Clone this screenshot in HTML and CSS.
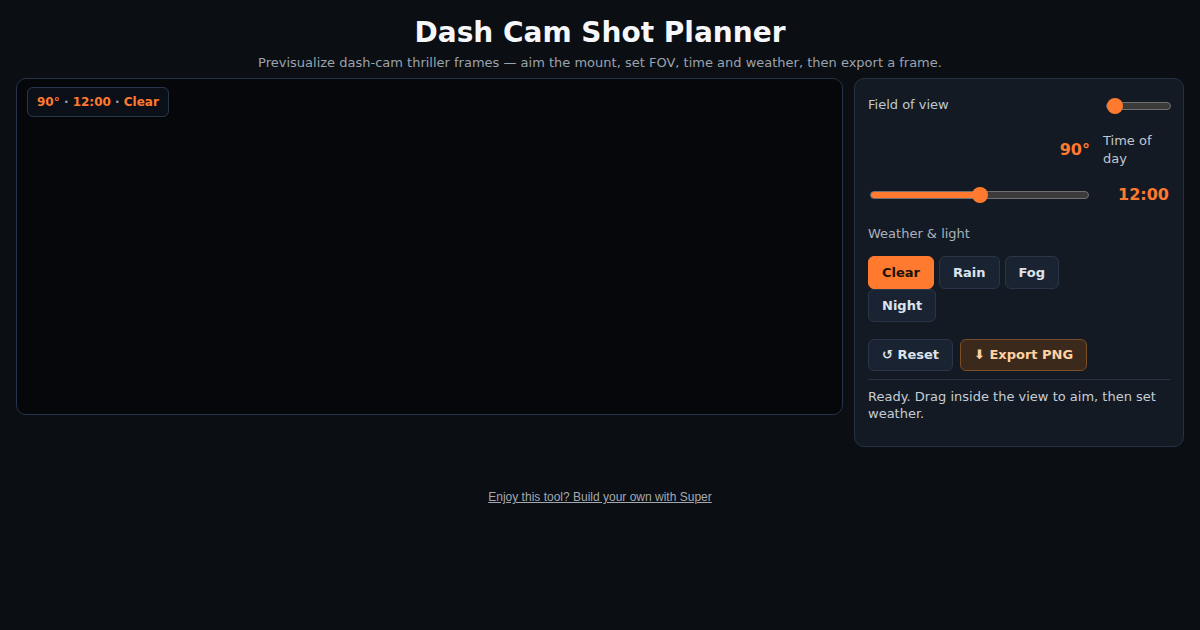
FILE: index.html
```html
<!DOCTYPE html>
<html lang="en">
<head>
<meta charset="utf-8">
<title>Dash Cam Shot Planner</title>
<link rel="stylesheet" href="styles.css">
</head>
<body>
<header class="header">
  <h1 class="title">Dash Cam Shot Planner</h1>
  <p class="subtitle">Previsualize dash-cam thriller frames — aim the mount, set FOV, time and weather, then export a frame.</p>
</header>
<main class="layout">
  <section class="view">
    <div class="badge">90° <span class="dot">·</span> 12:00 <span class="dot">·</span> Clear</div>
  </section>
  <aside class="panel">
    <div class="controls">
      <label class="ctl-label ctl-first" for="fov">Field of view</label>
      <input id="fov" class="range range-fov" type="range" min="90" max="170" value="90" style="--p: 0%">
      <span class="value">90°</span>
      <label class="ctl-label" for="tod">Time of day</label>
      <input id="tod" class="range range-tod" type="range" min="0" max="24" value="12" style="--p: 50%">
      <span class="value">12:00</span>
    </div>
    <div class="section-label">Weather &amp; light</div>
    <div class="weather">
      <button class="btn btn-active">Clear</button>
      <button class="btn">Rain</button>
      <button class="btn">Fog</button>
      <button class="btn">Night</button>
    </div>
    <div class="actions">
      <button class="btn btn-action">↺ Reset</button>
      <button class="btn btn-export">⬇ Export PNG</button>
    </div>
    <p class="status">Ready. Drag inside the view to aim, then set weather.</p>
  </aside>
</main>
<footer class="footer">
  <a class="footer-link" href="#">Enjoy this tool? Build your own with Super</a>
</footer>
</body>
</html>
```
FILE: styles.css
```css
* { box-sizing: border-box; }
html, body { height: 100%; }
body {
  margin: 0;
  background: #0b0e13;
  font-family: "DejaVu Sans", sans-serif;
  color: #c3cad3;
}
.header { text-align: center; padding-top: 16px; }
.title {
  margin: 0;
  font-size: 28px;
  line-height: 34px;
  font-weight: bold;
  color: #f5f7fa;
}
.subtitle {
  margin: 4px 0 0;
  font-size: 13px;
  line-height: 18px;
  color: #9aa3ae;
}
.layout {
  display: grid;
  grid-template-columns: 1fr 330px;
  column-gap: 11px;
  align-items: start;
  padding: 0 16px;
  margin-top: 6px;
}
.view {
  position: relative;
  height: 337px;
  background: #05070a;
  border: 1px solid #26334a;
  border-radius: 10px;
}
.badge {
  position: absolute;
  left: 10px;
  top: 8px;
  padding: 7px 9px;
  font-size: 12px;
  line-height: 14px;
  font-weight: bold;
  color: #ff7a2f;
  background: #0b1018;
  border: 1px solid #28364c;
  border-radius: 6px;
}
.dot { color: #9aa3ae; }
.panel {
  background: #131a24;
  border: 1px solid #253246;
  border-radius: 10px;
  padding: 14px 13px 14px;
}
.controls {
  display: grid;
  grid-template-columns: 1fr 67px;
  grid-template-rows: 25px 36px 26px;
  column-gap: 12px;
  row-gap: 14px;
  align-items: center;
}
.ctl-label {
  font-size: 13px;
  line-height: 18px;
  color: #c0c8d2;
}
.ctl-first { margin-bottom: 2px; }
.range {
  -webkit-appearance: none;
  appearance: none;
  height: 16px;
  margin: 0;
  background: transparent;
}
.range-fov { width: 65px; justify-self: end; margin-right: -1px; }
.range-tod { width: 219px; margin-left: 2px; }
.range::-webkit-slider-runnable-track {
  height: 8px;
  border: 1px solid #707070;
  border-radius: 4px;
  background: linear-gradient(to right, #ff7a2f var(--p), #3b3b3b var(--p));
}
.range::-webkit-slider-thumb {
  -webkit-appearance: none;
  appearance: none;
  width: 16px;
  height: 16px;
  margin-top: -5px;
  border-radius: 50%;
  background: #ff7a2f;
  border: none;
}
.value {
  justify-self: end;
  margin-right: 1px;
  font-size: 16px;
  line-height: 20px;
  font-weight: bold;
  color: #ff7a2f;
}
.section-label {
  margin-top: 17px;
  font-size: 13px;
  line-height: 18px;
  color: #a9b2bd;
}
.weather {
  display: flex;
  flex-wrap: wrap;
  column-gap: 5px;
  row-gap: 0;
  max-width: 223px;
  margin-top: 13px;
}
.btn {
  font-family: "DejaVu Sans", sans-serif;
  font-size: 13px;
  line-height: 15px;
  font-weight: bold;
  padding: 8px 13px;
  color: #dce3ec;
  background: #1a2331;
  border: 1px solid #2a3648;
  border-radius: 6px;
}
.btn-active {
  background: #ff7a2f;
  border-color: #ff7a2f;
  color: #1b1209;
}
.actions {
  display: flex;
  gap: 7px;
  margin-top: 17px;
}
.btn-action { padding: 7px 13px; line-height: 16px; }
.btn-export {
  padding: 7px 13px;
  line-height: 16px;
  background: #3b2a1b;
  border-color: #7a4e27;
  color: #ffd1a3;
}
.status {
  margin: 8px 0 10px;
  padding-top: 8px;
  border-top: 1px solid #2a3441;
  font-size: 13px;
  line-height: 17px;
  color: #c6cdd6;
}
.footer {
  text-align: center;
  margin-top: 39px;
}
.footer-link {
  font-family: "Liberation Sans", Arial, sans-serif;
  font-size: 12px;
  line-height: 14px;
  color: #a3a9b0;
  text-decoration: underline;
}
```
